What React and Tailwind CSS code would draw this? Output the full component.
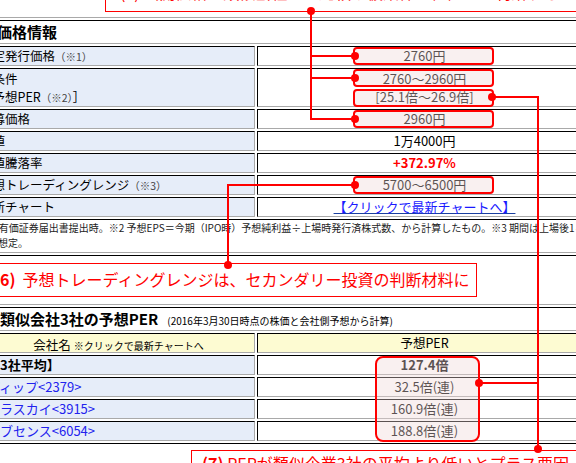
import React from 'react'

const cellEdge = 'border border-t-black border-l-black border-r-[#a9a9a9] border-b-[#a9a9a9]'
const tableEdge = 'border border-t-[#a9a9a9] border-l-[#a9a9a9] border-r-black border-b-black p-[2px] flex flex-col gap-[2px]'

function Row({ h = 'h-[20px]', labelW = 'w-[278px]', labelCls = '', label, children, valueCls = '' }) {
  return (
    <div className={`flex gap-[2px] ${h}`}>
      <div className={`${labelW} shrink-0 ${cellEdge} bg-[#e6edf9] whitespace-nowrap overflow-hidden ${labelCls}`}>{label}</div>
      <div className={`flex-1 ${cellEdge} bg-white text-center whitespace-nowrap ${valueCls}`}>{children}</div>
    </div>
  )
}

const Note = ({ n }) => <span className="text-[10.5px] text-[#444]">（※{n}）</span>

function Pill({ cls }) {
  return (
    <div className={`absolute left-[353px] w-[141px] h-[18px] rounded-[4px] border-2 border-[#f00] bg-[rgba(240,215,215,0.38)] ${cls}`} />
  )
}

const Dot = ({ cls }) => <div className={`absolute w-[8px] h-[8px] rounded-full bg-[#f00] ${cls}`} />

const lbl = 'pl-[2px] text-[12.5px] leading-[18px]'
const val = 'text-[13px] leading-[18px]'
const lbl2 = 'pl-[4px] text-[13px] leading-[18px]'

export default function App() {
  return (
    <div className="relative w-[576px] h-[463px] overflow-hidden bg-white text-black font-['Noto_Sans_CJK_JP',sans-serif]">
      {/* callout above, cut off by the top edge */}
      <div className="-mt-[30px] ml-[105px] w-[500px] h-[42px] border border-[#f00] pt-[12px] pl-[14px] text-[16px] leading-[18px] text-[#f00] whitespace-nowrap">
        (5) 公開価格は類似会社との比較や仮条件の位置から判断する
      </div>

      {/* price info table */}
      <div className={`mt-[5px] -ml-[26px] w-[621px] ${tableEdge}`}>
        <div className={`h-[24px] ${cellEdge} bg-white pl-[19px] text-[15px] font-bold leading-[21px]`}>価格情報</div>
        <Row labelCls={lbl} valueCls={val} label={<>想定発行価格<Note n="1" /></>}>2760円</Row>
        <Row h="h-[39px]" labelCls={`${lbl} pt-[1px]`} valueCls={`${val} pt-[1px]`}
          label={<>仮条件<br />［予想PER<Note n="2" />］</>}>
          2760～2960円<br />[25.1倍～26.9倍]
        </Row>
        <Row labelCls={lbl} valueCls={val} label="公募価格">2960円</Row>
        <Row labelCls={lbl} valueCls={val} label="初値">1万4000円</Row>
        <Row labelCls={lbl} valueCls={`${val} font-bold text-[#f00]`} label="初値騰落率">+372.97%</Row>
        <Row labelCls={lbl} valueCls={val} label={<>予想トレーディングレンジ<Note n="3" /></>}>5700～6500円</Row>
        <Row labelCls={lbl} valueCls={val} label="最新チャート">
          <a href="#" className="text-[#1a1aff] underline decoration-[#1a3fa0]">【クリックで最新チャートへ】</a>
        </Row>
        <div className={`h-[34px] ${cellEdge} bg-white text-[10px] leading-[15px] text-[#222] whitespace-nowrap overflow-hidden`}>
          <div className="pl-[3px]">※1 有価証券届出書提出時。※2 予想EPS＝今期（IPO時）予想純利益÷上場時発行済株式数、から計算したもの。※3 期間は上場後1ヶ月間と</div>
          <div className="pl-[10px]">を想定。</div>
        </div>
      </div>

      {/* callout 6 */}
      <div className="mt-[7px] -ml-[14px] w-[491px] h-[34px] border border-[#f00] pl-[7px] text-[16px] leading-[31px] text-[#f00] whitespace-nowrap">
        <span className="font-bold">(6)</span><span className="ml-[7px]">予想トレーディングレンジは、セカンダリー投資の判断材料に</span>
      </div>

      {/* similar companies table */}
      <div className={`mt-[7px] -ml-[21px] w-[616px] ${tableEdge}`}>
        <div className={`h-[24px] ${cellEdge} bg-white pl-[17px] leading-[21px] whitespace-nowrap`}>
          <span className="text-[15px] font-bold">類似会社3社の予想PER</span>
          <span className="ml-[9px] text-[10px]">(2016年3月30日時点の株価と会社側予想から計算)</span>
        </div>
        <div className="flex gap-[2px] h-[20px]">
          <div className={`w-[273px] shrink-0 ${cellEdge} bg-[#fdfbd2] text-center leading-[18px] whitespace-nowrap`}>
            <span className="text-[12.5px]">会社名</span><span className="ml-[3px] text-[10px]">※クリックで最新チャートへ</span>
          </div>
          <div className={`flex-1 ${cellEdge} bg-[#fdfbd2] text-center text-[12.5px] leading-[18px]`}>予想PER</div>
        </div>
        <Row labelW="w-[273px]" labelCls={`${lbl2} font-bold`} valueCls={`${val} font-bold`} label="【3社平均】">127.4倍</Row>
        <Row labelW="w-[273px]" labelCls={`${lbl2} text-[#2222ee]`} valueCls={val} label="ディップ<2379>">32.5倍(連)</Row>
        <Row labelW="w-[273px]" labelCls={`${lbl2} text-[#2222ee]`} valueCls={val} label="テラスカイ<3915>">160.9倍(連)</Row>
        <Row labelW="w-[273px]" labelCls={`${lbl2} text-[#2222ee]`} valueCls={val} label="リブセンス<6054>">188.8倍(連)</Row>
      </div>

      {/* callout 7, cut off by the bottom edge */}
      <div className="mt-[6px] ml-[191px] w-[420px] h-[40px] border border-[#f00] pt-[2px] pl-[10px] text-[16px] leading-[20px] text-[#f00] whitespace-nowrap">
        <span className="font-bold">(7)</span> PERが類似企業3社の平均より低いとプラス要因
      </div>

      {/* annotation overlays */}
      <Pill cls="top-[47px]" />
      <Pill cls="top-[69px]" />
      <Pill cls="top-[89px]" />
      <Pill cls="top-[110px]" />
      <Pill cls="top-[176px]" />
      <div className="absolute left-[375px] top-[356px] w-[105px] h-[86px] rounded-[8px] border-2 border-[#f00] bg-[rgba(240,215,215,0.38)]" />

      <div className="absolute left-[310px] top-[11px] w-[2px] h-[109px] bg-[#f00]" />
      <div className="absolute left-[310px] top-[55px] w-[45px] h-[2px] bg-[#f00]" />
      <div className="absolute left-[310px] top-[77px] w-[45px] h-[2px] bg-[#f00]" />
      <div className="absolute left-[310px] top-[118px] w-[45px] h-[2px] bg-[#f00]" />
      <div className="absolute left-[492px] top-[96px] w-[47px] h-[2px] bg-[#f00]" />
      <div className="absolute left-[537px] top-[96px] w-[2px] h-[354px] bg-[#f00]" />
      <div className="absolute left-[479px] top-[382px] w-[59px] h-[2px] bg-[#f00]" />
      <div className="absolute left-[227px] top-[184px] w-[128px] h-[2px] bg-[#f00]" />
      <div className="absolute left-[227px] top-[184px] w-[2px] h-[82px] bg-[#f00]" />

      <Dot cls="left-[307px] top-[7px]" />
      <Dot cls="left-[351px] top-[52px]" />
      <Dot cls="left-[351px] top-[74px]" />
      <Dot cls="left-[351px] top-[115px]" />
      <Dot cls="left-[488px] top-[93px]" />
      <Dot cls="left-[351px] top-[181px]" />
      <Dot cls="left-[475px] top-[379px]" />
      <Dot cls="left-[224px] top-[261px]" />
      <Dot cls="left-[534px] top-[445px]" />
    </div>
  )
}
